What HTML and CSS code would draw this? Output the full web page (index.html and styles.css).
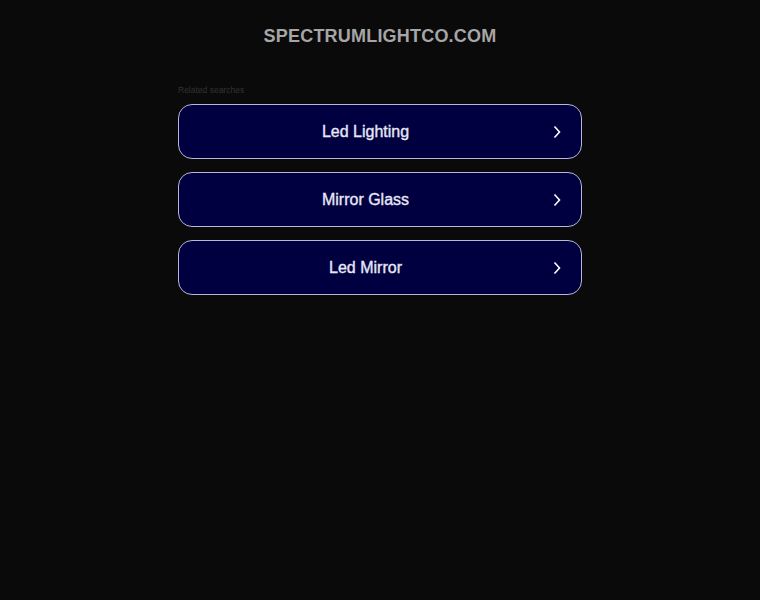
FILE: index.html
```html
<!DOCTYPE html>
<html lang="en">
<head>
  <meta charset="UTF-8" />
  <title>spectrumlightco.com</title>
  <link rel="stylesheet" href="styles.css">
</head>
<body>
  <div class="header">
    <h1 class="domain">spectrumlightco.com</h1>
  </div>

  <div class="container">
    <p class="related">Related searches</p>
    <a class="search-link" href="#">
      <span class="label">Led Lighting</span>
      <svg class="chevron" width="10" height="14" viewBox="0 0 10 14"><path d="M2.5 1.5 L7.5 7 L2.5 12.5" fill="none" stroke="#fff" stroke-width="1.6"/></svg>
    </a>
    <a class="search-link" href="#">
      <span class="label">Mirror Glass</span>
      <svg class="chevron" width="10" height="14" viewBox="0 0 10 14"><path d="M2.5 1.5 L7.5 7 L2.5 12.5" fill="none" stroke="#fff" stroke-width="1.6"/></svg>
    </a>
    <a class="search-link" href="#">
      <span class="label">Led Mirror</span>
      <svg class="chevron" width="10" height="14" viewBox="0 0 10 14"><path d="M2.5 1.5 L7.5 7 L2.5 12.5" fill="none" stroke="#fff" stroke-width="1.6"/></svg>
    </a>
  </div>
</body>
</html>
```

FILE: styles.css
```css
body {
  margin: 0;
  background-color: #0a0a0a;
  font-family: "Liberation Sans", Arial, sans-serif;
}

.header {
  padding-top: 25px;
  text-align: center;
}

.domain {
  margin: 0;
  font-size: 18px;
  font-weight: bold;
  letter-spacing: 0.2px;
  color: #a6a6a6;
  text-transform: uppercase;
  line-height: 22px;
}

.container {
  width: 404px;
  margin: 0 auto;
  padding-top: 38px;
}

.related {
  margin: 0 0 8px 0;
  font-size: 8.5px;
  color: #333;
  line-height: 11px;
}

.search-link {
  display: flex;
  align-items: center;
  justify-content: center;
  position: relative;
  box-sizing: border-box;
  height: 55px;
  margin-bottom: 13px;
  padding-right: 29px;
  background-color: #000040;
  border: 1px solid #b8b8d8;
  border-radius: 14px;
  text-decoration: none;
}

.label {
  color: #e8e8f8;
  font-size: 16px;
  -webkit-text-stroke: 0.35px #e8e8f8;
}

.chevron {
  position: absolute;
  right: 19px;
  top: 20px;
}
```
